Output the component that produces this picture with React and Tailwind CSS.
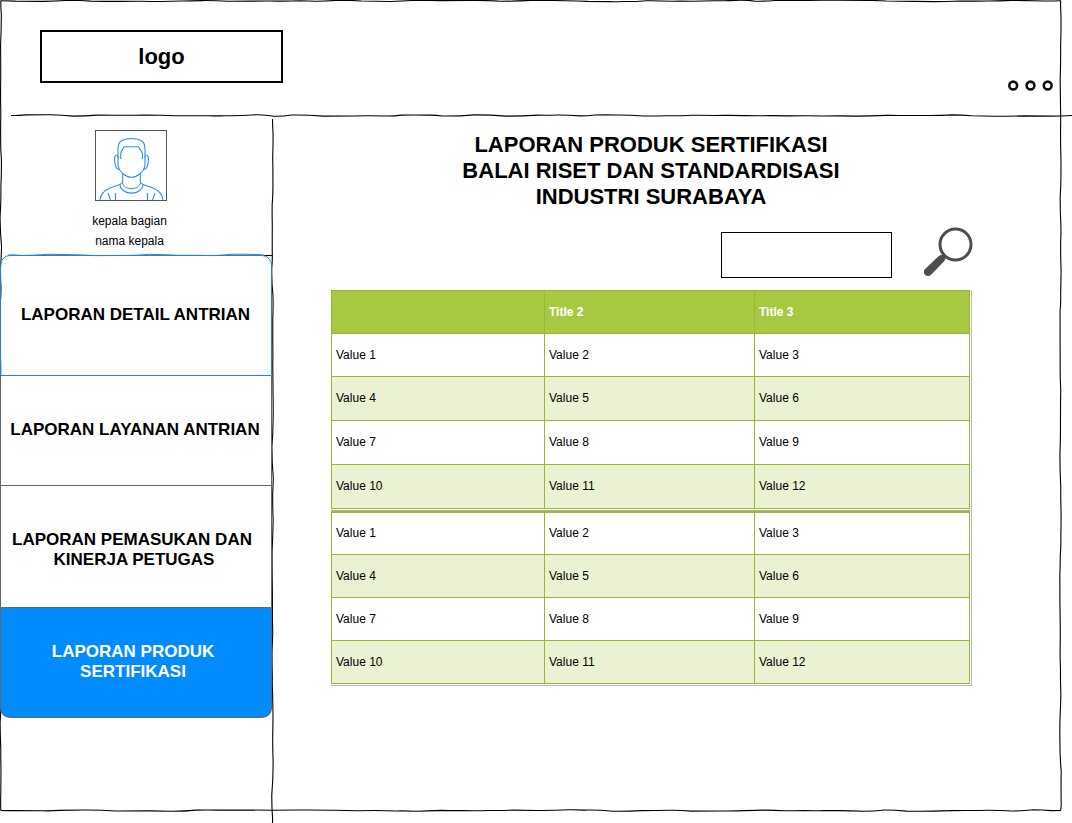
import React from "react";

function wobble(length, seed, vertical, x, y) {
  let s = seed;
  const rnd = () => {
    s = (s * 16807) % 2147483647;
    return s / 2147483647;
  };
  let d = `M${x} ${y}`;
  let pos = 0;
  let prev = 0;
  while (pos < length) {
    const step = Math.min(14 + rnd() * 20, length - pos);
    const off = (rnd() - 0.5) * 1.6;
    const mid = pos + step / 2;
    pos += step;
    const end = pos >= length ? 0 : off;
    const ctrl = prev + (rnd() - 0.5) * 0.6;
    d += vertical
      ? `Q${x + ctrl} ${y + mid} ${x + end} ${y + pos}`
      : `Q${x + mid} ${y + ctrl} ${x + pos} ${y + end}`;
    prev = end;
  }
  return d;
}

function SketchLines() {
  return (
    <svg className="pointer-events-none absolute inset-0" width="1072" height="823" fill="none" stroke="#000" strokeWidth="1.1">
      <path d={wobble(1060, 4711, false, 0.8, 0.8)} />
      <path d={wobble(810, 911, true, 0.8, 0.6)} />
      <path d={wobble(810, 3571, true, 1060.6, 0.6)} />
      <path d={wobble(1060, 8123, false, 0.8, 810.5)} />
      <path d={wobble(1061, 6577, false, 11, 115.5)} />
      <path d={wobble(704, 2903, true, 272.5, 119)} />
      <path d="M264 255.500H272" />
      <path d={wobble(256, 1207, false, 8, 255)} stroke="#2f7fbd" strokeWidth="1" />
    </svg>
  );
}

function Avatar() {
  return (
    <svg width="70" height="69" viewBox="0 0 70 69" fill="none" stroke="#3090e6" strokeWidth="1.1">
      <path d="M22 27V18C22 13 23 11 26 9.500C31 6.800 40 6.800 45 9.500C48 11 49 13 49 18V27" />
      <path d="M24.700 28V23C25 20 27 18.500 28 15.700H42.500C43.500 18.500 46 20 46.500 23V28" />
      <path d="M22 25V34C23 41 30 46.300 35.500 46.300S48 41 49 34V25" />
      <path d="M22 24C18 23.500 18.500 27 18.700 30C19 35 20 38.500 23.500 38.500M49 24C53 23.500 52.500 27 52.300 30C52 35 51 38.500 47.500 38.500" />
      <path d="M26.700 43V50C26.700 51.500 25 53 24 53.500C25 65 46 65 47 53.500C46 53 44.300 51.500 44.300 50V43" />
      <path d="M26.500 51.500C27.500 59.500 43.500 59.500 44.500 51.500" />
      <path d="M24 53.500L14 57C7 60 4.500 64 4 69M47 53.500L57 57C64 60 66.500 64 67 69" />
      <path d="M12 62L14.500 69M19.500 62V69M59 62L56.500 69M51.500 62V69" />
    </svg>
  );
}

const rowsTop = [
  { size: "h-[43px]", cell: "", values: ["Value 1", "Value 2", "Value 3"] },
  { size: "h-[44px] bg-[#eaf2d3]", cell: "pb-0.5", values: ["Value 4", "Value 5", "Value 6"] },
  { size: "h-[44px]", cell: "pb-0.5", values: ["Value 7", "Value 8", "Value 9"] },
  { size: "h-[44px] bg-[#eaf2d3]", cell: "pb-0.5", values: ["Value 10", "Value 11", "Value 12"] },
];
const rowsBottom = [
  { size: "h-[42px]", cell: "pb-0.5", values: ["Value 1", "Value 2", "Value 3"] },
  { size: "h-[43px] bg-[#eaf2d3]", cell: "", values: ["Value 4", "Value 5", "Value 6"] },
  { size: "h-[43px]", cell: "", values: ["Value 7", "Value 8", "Value 9"] },
  { size: "h-[43px] bg-[#eaf2d3]", cell: "", values: ["Value 10", "Value 11", "Value 12"] },
];

function Row({ size, cell, values }) {
  return (
    <div className={`grid grid-cols-[213px_210px_215px] border-b border-[#98b92f] ${size}`}>
      {values.map((v) => (
        <div key={v} className={`flex items-center border-r border-[#98b92f] pl-1 ${cell}`}>
          {v}
        </div>
      ))}
    </div>
  );
}

function MenuItem({ className, children }) {
  return (
    <div className={`flex flex-col items-center justify-center text-[17px] leading-5 font-bold whitespace-nowrap ${className}`}>
      {children}
    </div>
  );
}

export default function App() {
  return (
    <div className="relative h-[823px] w-[1072px] overflow-hidden bg-white font-['Liberation_Sans',Arial,sans-serif] text-xs text-black">
      <SketchLines />
      <header className="flex h-[116px] justify-between pt-[30px] pr-[18px] pl-10">
        <div className="flex h-[53px] w-[243px] items-center justify-center border-2 border-black text-[22px] font-bold">
          logo
        </div>
        <svg className="mt-[49px]" width="47" height="13" viewBox="0 0 47 13" fill="none" stroke="#111" strokeWidth="2.600">
          <circle cx="6.200" cy="6.500" r="3.900" />
          <circle cx="23.500" cy="6.500" r="3.900" />
          <circle cx="40.700" cy="6.500" r="3.900" />
        </svg>
      </header>
      <div className="flex">
        <aside className="w-[272px] shrink-0">
          <div className="flex h-[139px] flex-col items-center pt-[14px] pr-[11px]">
            <div className="h-[71px] w-[72px] border border-[#555]">
              <Avatar />
            </div>
            <div className="mt-[10px] pr-0.5 leading-5">kepala bagian</div>
            <div className="pr-0.5 leading-5">nama kepala</div>
          </div>
          <nav className="relative">
            <MenuItem className="h-[121px] rounded-t-[10px] border border-[#2484c6] pr-px pb-[2px]">
              <span>LAPORAN DETAIL ANTRIAN</span>
            </MenuItem>
            <MenuItem className="h-[110px] border-x border-b border-[#666] bg-white pr-[2px] pb-[2px]">
              <span>LAPORAN LAYANAN ANTRIAN</span>
            </MenuItem>
            <MenuItem className="h-[122px] border-x border-b border-[#666] bg-white pt-[6px] pr-2">
              <span>LAPORAN PEMASUKAN DAN</span>
              <span className="pl-1">KINERJA PETUGAS</span>
            </MenuItem>
            <MenuItem className="h-[110px] rounded-b-[10px] border-x border-b border-[#666] bg-[#008cff] pr-[6px] pb-[2px] text-white">
              <span>LAPORAN PRODUK</span>
              <span>SERTIFIKASI</span>
            </MenuItem>
          </nav>
        </aside>
        <main className="pl-[59px]">
          <h1 className="flex w-[640px] flex-col items-center pt-4 text-[22px] leading-[26px] font-bold">
            <span>LAPORAN PRODUK SERTIFIKASI</span>
            <span>BALAI RISET DAN STANDARDISASI</span>
            <span>INDUSTRI SURABAYA</span>
          </h1>
          <div className="flex h-[80px] w-[642px] items-start justify-end pt-[17px]">
            <div className="mt-[5px] mr-8 h-[46px] w-[171px] border border-black" />
            <svg width="49" height="49" viewBox="0 0 49 49" fill="none" stroke="#4d4d4d">
              <circle cx="31.500" cy="17.500" r="15.500" strokeWidth="3" />
              <path d="M21.500 28L18 31" strokeWidth="3" />
              <path d="M20 28.500C21.500 30 21.500 32 20 34L7.500 47C4 51 -1.500 47.500 .5 43L13.500 30.500C15.500 28.500 18 27.500 20 28.500Z" fill="#4d4d4d" stroke="#4d4d4d" strokeWidth="0.700" />
            </svg>
          </div>
          <div className="w-[641px] border-r border-b border-[#bbb] pr-px pb-px">
            <div className="w-[639px] border-t border-l border-[#98b92f]">
              <div className="grid h-[43px] grid-cols-[213px_210px_215px] border-b border-[#98b92f] bg-[#a7c942] font-bold text-white">
                <div className="border-r border-[#98b92f]" />
                <div className="flex items-center border-r border-[#98b92f] pl-1">Title 2</div>
                <div className="flex items-center border-r border-[#98b92f] pl-1">Title 3</div>
              </div>
              {rowsTop.map((r) => (
                <Row key={r.values[0]} {...r} />
              ))}
            </div>
            <div className="mt-px h-[3px] w-[639px] border-t border-[#a9b28f] bg-[#9cb650]" />
            <div className="w-[639px] border-l border-[#98b92f]">
              {rowsBottom.map((r) => (
                <Row key={r.values[0]} {...r} />
              ))}
            </div>
          </div>
        </main>
      </div>
    </div>
  );
}
